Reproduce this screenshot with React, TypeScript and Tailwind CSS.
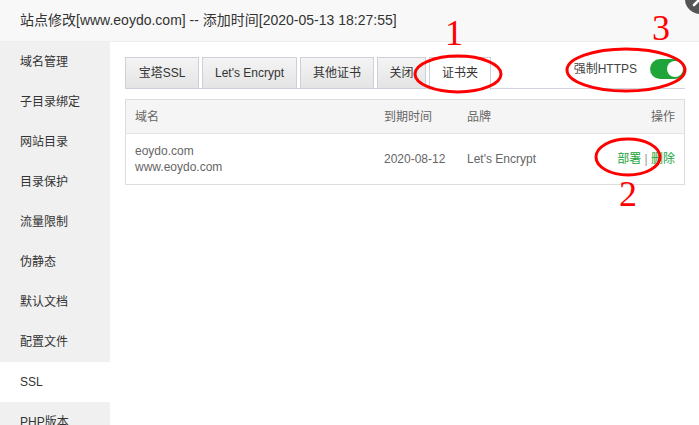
import React from "react";

const menu = ["域名管理", "子目录绑定", "网站目录", "目录保护", "流量限制", "伪静态", "默认文档", "配置文件", "SSL", "PHP版本"];
const tabs: { t: string; w: string }[] = [
  { t: "宝塔SSL", w: "w-[74px]" },
  { t: "Let's Encrypt", w: "w-[95px]" },
  { t: "其他证书", w: "w-[74px]" },
  { t: "关闭", w: "w-[49px]" },
];

export default function App() {
  return (
    <div
      className="relative w-[699px] h-[425px] overflow-hidden bg-white text-[#333]"
      style={{ fontFamily: '"Liberation Sans", "Noto Sans CJK SC", sans-serif' }}
    >
      <div className="h-[42px] bg-[#f8f8f8] border-b border-[#eeeeee] pl-5 text-[14px] leading-[41px] text-[#333]">
        站点修改[www.eoydo.com] -- 添加时间[2020-05-13 18:27:55]
      </div>
      <div className="flex h-[383px]">
        <div className="w-[110px] shrink-0 bg-[#f0f0f0] flex flex-col">
          {menu.map((m) => (
            <div
              key={m}
              className={`h-10 shrink-0 pl-5 text-[12px] leading-10 text-[#333] ${m === "SSL" ? "bg-white" : ""}`}
            >
              {m}
            </div>
          ))}
        </div>
        <div className="flex-1 pl-[15px] pr-[14px] pt-[15px]">
          <div className="flex items-start border-b border-[#d3d3de] h-[32px]">
            {tabs.map(({ t, w }) => (
              <div
                key={t}
                className={`${w} h-[32px] mr-[3px] border border-[#cfcfdc] bg-gradient-to-b from-[#f4f4f4] to-[#e4e4e4] text-[12px] leading-[30px] text-[#333] text-center`}
              >
                {t}
              </div>
            ))}
            <div className="h-[33px] border border-b-0 border-[#cfcfdc] bg-white text-[12px] leading-[30px] text-[#333] w-[62px] text-center">
              证书夹
            </div>
            <div className="ml-auto flex items-center mt-[2px] h-[20px]">
              <span className="text-[12px] text-[#444] mr-[13px]">强制HTTPS</span>
              <div className="w-[35px] h-[20px] rounded-full bg-[#20a53a] flex items-center justify-end pr-[2px]">
                <div className="w-[16px] h-[16px] rounded-full bg-white" />
              </div>
            </div>
          </div>
          <div className="mt-[10px] border border-[#dddddd] text-[12px] text-[#666]">
            <div className="grid grid-cols-[258px_83px_1fr_auto] h-[34px] items-center bg-[#f5f5f5] border-b border-[#e4e4e4]">
              <div className="pl-[9px]">域名</div>
              <div>到期时间</div>
              <div>品牌</div>
              <div className="pr-[9px] text-right">操作</div>
            </div>
            <div className="grid grid-cols-[258px_83px_1fr_auto] h-[50px] items-center">
              <div className="pl-[9px] leading-4">
                <div>eoydo.com</div>
                <div>www.eoydo.com</div>
              </div>
              <div>2020-08-12</div>
              <div>Let's Encrypt</div>
              <div className="pr-[9px] text-right text-[#20a53a]">
                部署 <span className="text-[#999]">|</span> 删除
              </div>
            </div>
          </div>
        </div>
      </div>

      {/* close button */}
      <div className="absolute left-[685px] top-[-16px] w-[30px] h-[30px] rounded-full bg-[#555]">
        <svg width="30" height="30" viewBox="0 0 30 30" className="absolute inset-0">
          <path d="M9 9 L21 21 M21 9 L9 21" stroke="white" strokeWidth="2.5" strokeLinecap="round" />
        </svg>
      </div>

      {/* annotations */}
      <svg className="absolute left-0 top-0 pointer-events-none" width="699" height="425" viewBox="0 0 699 425">
        <ellipse cx="458" cy="74" rx="43" ry="18" fill="none" stroke="#ff0000" strokeWidth="3" />
        <ellipse cx="626" cy="70" rx="59" ry="21" fill="none" stroke="#ff0000" strokeWidth="3" />
        <ellipse cx="628" cy="157" rx="32" ry="18" fill="none" stroke="#ff0000" strokeWidth="3" />
      </svg>
      <div
        className="absolute left-[445px] top-[15px] text-[36px] leading-[36px] text-[#ff0000]"
        style={{ fontFamily: '"Liberation Serif", serif' }}
      >
        1
      </div>
      <div
        className="absolute left-[652px] top-[10px] text-[36px] leading-[36px] text-[#ff0000]"
        style={{ fontFamily: '"Liberation Serif", serif' }}
      >
        3
      </div>
      <div
        className="absolute left-[619px] top-[176px] text-[36px] leading-[36px] text-[#ff0000]"
        style={{ fontFamily: '"Liberation Serif", serif' }}
      >
        2
      </div>
    </div>
  );
}
